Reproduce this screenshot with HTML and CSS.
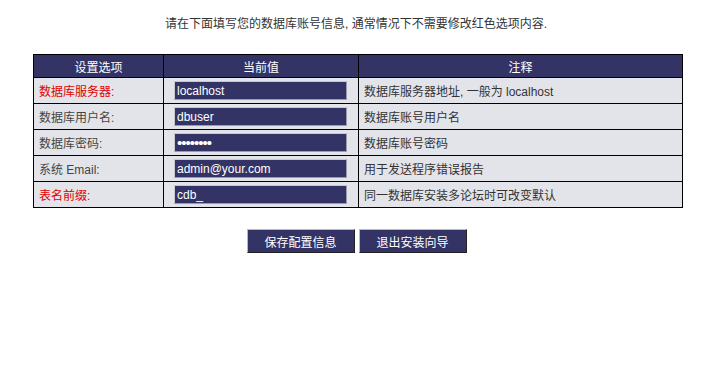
FILE: index.html
```html
<!DOCTYPE html>
<html lang="zh-CN">
<head>
    <meta charset="UTF-8">
    <title>安装向导 - 数据库设置</title>
    <link rel="stylesheet" href="styles.css">
</head>
<body>
    <!-- Intro -->
    <p class="intro">请在下面填写您的数据库账号信息, 通常情况下不需要修改红色选项内容.</p>

    <form>
        <table class="config">
            <tr class="head">
                <td class="c1">设置选项</td>
                <td class="c2">当前值</td>
                <td class="c3">注释</td>
            </tr>
            <tr>
                <td class="label red">数据库服务器:</td>
                <td class="value"><input type="text" class="field" value="localhost"></td>
                <td class="note">数据库服务器地址, 一般为 localhost</td>
            </tr>
            <tr>
                <td class="label">数据库用户名:</td>
                <td class="value"><input type="text" class="field" value="dbuser"></td>
                <td class="note">数据库账号用户名</td>
            </tr>
            <tr>
                <td class="label">数据库密码:</td>
                <td class="value"><input type="password" class="field pass" value="dbpasswd"></td>
                <td class="note">数据库账号密码</td>
            </tr>
            <tr>
                <td class="label">系统 Email:</td>
                <td class="value"><input type="text" class="field" value="admin@your.com"></td>
                <td class="note">用于发送程序错误报告</td>
            </tr>
            <tr>
                <td class="label red">表名前缀:</td>
                <td class="value"><input type="text" class="field" value="cdb_"></td>
                <td class="note">同一数据库安装多论坛时可改变默认</td>
            </tr>
        </table>

        <!-- Buttons -->
        <div class="buttons">
            <button type="button" class="btn">保存配置信息</button>
            <button type="button" class="btn">退出安装向导</button>
        </div>
    </form>
</body>
</html>
```

FILE: styles.css
```css
/* Reset */
* {
    box-sizing: border-box;
}

body {
    margin: 0;
    padding: 0;
    background: #fff;
    color: #333;
    font-family: "Liberation Sans", "Noto Sans CJK SC", sans-serif;
    font-size: 12px;
}

/* Intro line */
.intro {
    margin: 0;
    padding-top: 16px;
    height: 54px;
    text-align: center;
    line-height: 16px;
}

/* Config table */
.config {
    width: 650px;
    margin: 0 0 0 33px;
    border-collapse: collapse;
    background: #e3e4ea;
}

.config td {
    border: 1px solid #000;
    height: 26px;
    padding: 0 5px;
}

.config .head td {
    background: #333366;
    color: #fff;
    text-align: center;
    height: 23px;
}

.c1 { width: 130px; }
.c2 { width: 195px; }

.label {
    color: #444;
}

.label.red {
    color: #e00000;
}

.value {
    padding-left: 10px !important;
}

.note {
    color: #333;
}

/* Inputs */
.field {
    display: block;
    width: 173px;
    height: 19px;
    padding: 0 2px;
    background: #333366;
    color: #fff;
    font-family: "Liberation Sans", "Noto Sans CJK SC", sans-serif;
    font-size: 12px;
    border: 1px solid #9a9ab0;
    border-top-color: #c8c8d4;
    border-left-color: #c8c8d4;
}

.field.pass {
    font-size: 15px;
    letter-spacing: -1px;
}

/* Buttons */
.buttons {
    display: flex;
    justify-content: center;
    gap: 4px;
    margin-top: 21px;
    padding-left: 1px;
}

.btn {
    width: 108px;
    height: 24px;
    padding: 0;
    background: #333366;
    color: #fff;
    font-family: "Liberation Sans", "Noto Sans CJK SC", sans-serif;
    font-size: 12px;
    border: 1px solid;
    border-color: #b8b8c8 #222 #222 #b8b8c8;
    cursor: pointer;
}
```
